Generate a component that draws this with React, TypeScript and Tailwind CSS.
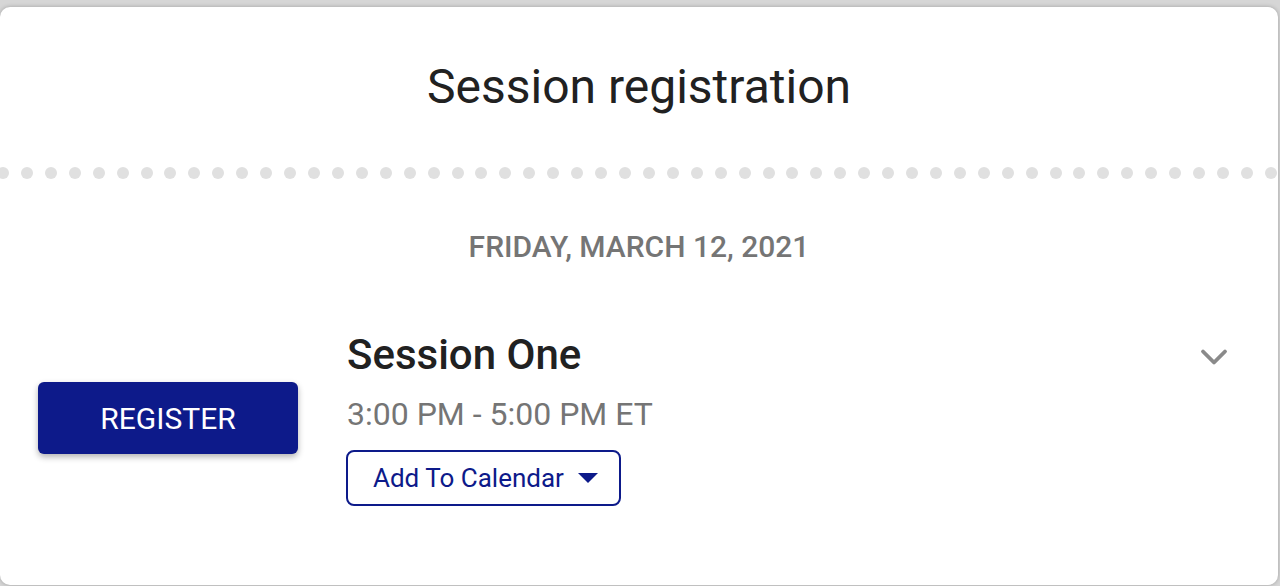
import { ChevronDown } from "lucide-react";

const DOTS = Array.from({ length: 54 });

export default function App() {
  return (
    <div className="h-[586px] w-[1280px] overflow-hidden bg-[#d6d6d6] pt-[7px] pr-[2px] font-['Roboto',sans-serif]">
      <div className="h-[578px] rounded-[10px] bg-white shadow-[0_0_4px_rgba(0,0,0,0.25)]">
        {/* Header */}
        <div className="flex h-[160px] items-center justify-center">
          <h1 className="text-[48px] leading-[56px] text-[#212121]">Session registration</h1>
        </div>

        {/* Perforation */}
        <div className="-ml-[3px] flex w-[1280px] justify-between overflow-hidden">
          {DOTS.map((_, i) => (
            <span key={i} className="h-[12px] w-[12px] shrink-0 rounded-full bg-[#e0e0e0]" />
          ))}
        </div>

        {/* Date */}
        <div className="mt-[51px] text-center text-[30px] font-medium leading-[34px] text-[#757575]">
          FRIDAY, MARCH 12, 2021
        </div>

        {/* Session row */}
        <div className="mt-[67px] flex items-start pl-[38px] pr-[42px]">
          <div className="pt-[51px]">
            <button className="flex h-[72px] w-[260px] items-center justify-center rounded-[6px] bg-[#0d1a8a] text-[30px] text-white shadow-[0_3px_6px_rgba(0,0,0,0.3)]">
              REGISTER
            </button>
          </div>
          <div className="ml-[49px] flex flex-1 flex-col items-start">
            <div className="text-[42px] font-medium leading-[48px] text-[#212121]">Session One</div>
            <div className="mt-[17px] text-[32px] leading-[36px] text-[#757575]">3:00 PM - 5:00 PM ET</div>
            <button className="-ml-px mt-[18px] flex h-[56px] items-center gap-[14px] rounded-[8px] border-2 border-[#0d1a8a] pr-[21px] pl-[25px] text-[26px] text-[#0d1a8a]">
              Add To Calendar
              <svg width="20" height="10" viewBox="0 0 20 10">
                <path d="M0 0 L20 0 L10 10 Z" fill="#0d1a8a" />
              </svg>
            </button>
          </div>
          <ChevronDown className="mt-[4px] h-[44px] w-[44px] text-[#8a8a8a]" strokeWidth={2.1} />
        </div>
      </div>
    </div>
  );
}
